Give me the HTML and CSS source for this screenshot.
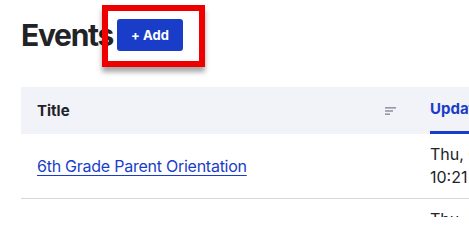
FILE: index.html
```html
<!DOCTYPE html>
<html lang="en">
<head>
<meta charset="utf-8">
<title>Events</title>
<link rel="stylesheet" href="styles.css">
</head>
<body>
<div class="page">
  <header class="page-head">
    <h1 class="title">Events</h1>
    <span class="highlight">
      <button class="add-btn" type="button">+ Add</button>
    </span>
  </header>
  <table class="grid">
    <thead>
      <tr>
        <th class="col-title">
          <div class="th-inner">
            <span>Title</span>
            <svg class="sort-icon" width="11" height="8" viewBox="0 0 11 8" aria-hidden="true">
              <rect x="0" y="0" width="11" height="1.6" fill="#9498a4"/>
              <rect x="0" y="3.2" width="8" height="1.6" fill="#9498a4"/>
              <rect x="0" y="6.4" width="5" height="1.6" fill="#9498a4"/>
            </svg>
          </div>
        </th>
        <th class="col-updated"><span class="active-sort">Updated</span></th>
      </tr>
    </thead>
    <tbody>
      <tr>
        <td class="col-title"><a href="#" class="row-link">6th Grade Parent Orientation</a></td>
        <td class="col-updated">Thu, 06 Jun 2024<br>10:21 AM</td>
      </tr>
      <tr>
        <td class="col-title"><a href="#" class="row-link">Spring Concert</a></td>
        <td class="col-updated">Thu, 06 Jun 2024<br>10:15 AM</td>
      </tr>
    </tbody>
  </table>
</div>
</body>
</html>
```
FILE: styles.css
```css
html, body {
  margin: 0;
  padding: 0;
  background: #ffffff;
}
body {
  font-family: Inter, "Liberation Sans", sans-serif;
  color: #222327;
  width: 469px;
  height: 217px;
  overflow: hidden;
}
.page {
  padding: 19px 0 0 21px;
  width: 448px;
  height: 198px;
  overflow: hidden;
}
.page-head {
  display: flex;
  align-items: center;
  height: 32px;
}
.title {
  margin: 0;
  width: 96px;
  flex: none;
  font-size: 30px;
  font-weight: 700;
  letter-spacing: -1.3px;
  line-height: 32px;
  color: #222327;
  white-space: nowrap;
}
.highlight {
  position: relative;
  display: block;
  flex: none;
}
.highlight::after {
  content: "";
  position: absolute;
  top: -14px;
  left: -15px;
  right: -22px;
  bottom: -16px;
  border: 6px solid #ee0000;
  box-shadow: 0 5px 5px rgba(0, 0, 0, 0.35);
  pointer-events: none;
}
.add-btn {
  display: block;
  width: 66px;
  height: 32px;
  border: 0;
  border-radius: 3px;
  background: #1a3dc9;
  color: #ffffff;
  font-family: Inter, "Liberation Sans", sans-serif;
  font-weight: 700;
  font-size: 13px;
  letter-spacing: 0.1px;
  padding: 0;
}
.grid {
  margin-top: 36px;
  border-collapse: collapse;
  table-layout: fixed;
  width: 560px;
}
.grid th {
  background: #f2f3f8;
  height: 47px;
  padding: 0;
  text-align: left;
  font-size: 15px;
  font-weight: 700;
  vertical-align: middle;
  color: #222327;
}
.col-title {
  width: 393px;
}
.th-inner {
  display: flex;
  align-items: center;
  justify-content: space-between;
  padding: 0 18px 0 16px;
}
.sort-icon {
  display: block;
}
.grid .col-updated {
  padding-left: 16px;
}
.grid th.col-updated {
  vertical-align: bottom;
}
.active-sort {
  display: inline-block;
  color: #1a3dc9;
  border-bottom: 3px solid #1a3dc9;
  padding: 0 40px 12px 0;
  line-height: 20px;
}
.grid td {
  height: 64px;
  border-bottom: 1px solid #d6d6d9;
  padding: 0;
  font-size: 16px;
  line-height: 23px;
  vertical-align: middle;
  white-space: nowrap;
}
.grid td.col-title {
  padding-left: 16px;
}
.row-link {
  color: #1a3dc9;
  letter-spacing: -0.25px;
  text-decoration: underline;
  text-underline-offset: 3px;
  text-decoration-thickness: 1px;
}
```
